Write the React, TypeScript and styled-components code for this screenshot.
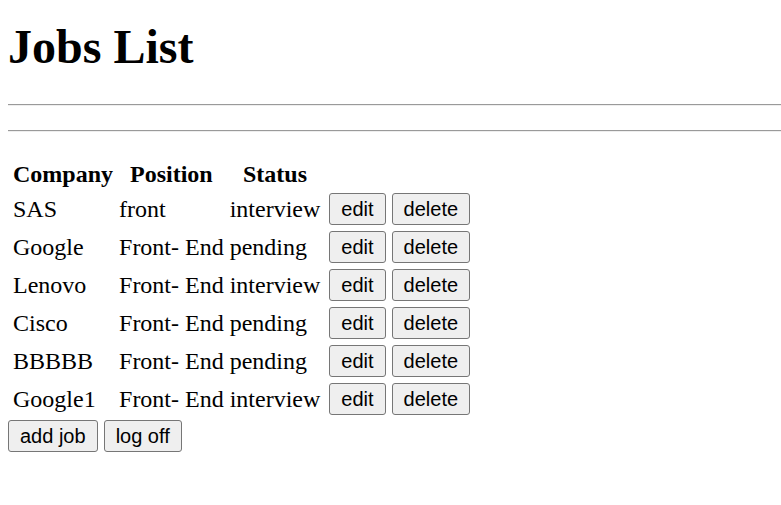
import React from 'react';
import styled, { createGlobalStyle } from 'styled-components';

const GlobalStyle = createGlobalStyle`
  body {
    margin: 8px 0 8px 8px;
    font-family: "Liberation Serif", "Times New Roman", serif;
    font-size: 24px;
    color: #000;
    background: #fff;
    overflow: hidden;
  }
`;

const Page = styled.div`
  display: flow-root;
`;

const Title = styled.h1`
  font-size: 48px;
  font-weight: bold;
  margin: 11px 0 30px;
`;

// margins only on top so the two rules keep 24px between them
const Rule = styled.hr`
  display: block;
  height: 0;
  margin: 24px 0 0;
  border: none;
  border-top: 1px solid #9a9a9a;
  border-bottom: 1px solid #eeeeee;
`;

const JobsTable = styled.table`
  margin-top: 26px;
  border-spacing: 4px 2px;
`;

const HeadCell = styled.th`
  padding: 1px;
  font-weight: bold;
  text-align: center;
`;

const Cell = styled.td`
  padding: 1px;
  height: 34px;
  white-space: nowrap;
`;

const ActionCell = styled(Cell)`
  padding-left: 4px;
`;

const Button = styled.button`
  font-family: "Liberation Sans", Arial, sans-serif;
  font-size: 20px;
  line-height: 22px;
  padding: 4px 11px;
  margin: 0;
  color: #000;
  background: #efefef;
  border: 1px solid #767676;
  border-radius: 3px;
`;

const Footer = styled.div`
  margin-top: 1px;
`;

interface Job {
  company: string;
  position: string;
  status: string;
}

const jobs: Job[] = [
  { company: 'SAS', position: 'front', status: 'interview' },
  { company: 'Google', position: 'Front- End', status: 'pending' },
  { company: 'Lenovo', position: 'Front- End', status: 'interview' },
  { company: 'Cisco', position: 'Front- End', status: 'pending' },
  { company: 'BBBBB', position: 'Front- End', status: 'pending' },
  { company: 'Google1', position: 'Front- End', status: 'interview' },
];

function JobRow({ job }: { job: Job }) {
  return (
    <tr>
      <Cell>{job.company}</Cell>
      <Cell>{job.position}</Cell>
      <Cell>{job.status}</Cell>
      <ActionCell>
        <Button>edit</Button> <Button>delete</Button>
      </ActionCell>
    </tr>
  );
}

export default function App() {
  return (
    <Page>
      <GlobalStyle />
      <Title>Jobs List</Title>
      <Rule />
      <Rule />
      <JobsTable>
        <thead>
          <tr>
            <HeadCell>Company</HeadCell>
            <HeadCell>Position</HeadCell>
            <HeadCell>Status</HeadCell>
          </tr>
        </thead>
        <tbody>
          {jobs.map((job, index) => (
            <JobRow job={job} key={index} />
          ))}
        </tbody>
      </JobsTable>
      <Footer>
        <Button>add job</Button> <Button>log off</Button>
      </Footer>
    </Page>
  );
}
